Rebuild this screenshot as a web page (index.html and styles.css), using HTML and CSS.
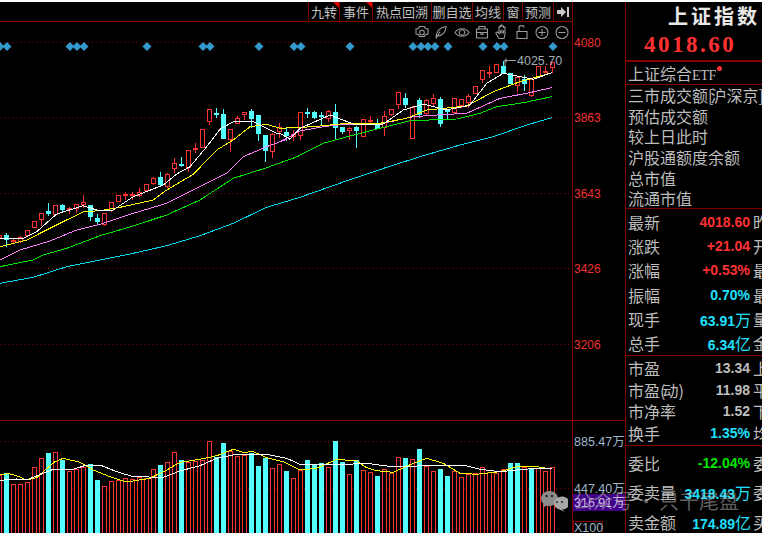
FILE: index.html
```html
<!DOCTYPE html>
<html lang="zh">
<head>
<meta charset="utf-8">
<title>上证指数</title>
<link rel="stylesheet" href="styles.css">
</head>
<body>
<div class="strip"></div>
<div class="app">
  <div class="chart-col">
    <div class="toolbar">
      <div class="btn w31 flag">九转</div>
      <div class="btn w33 flag">事件</div>
      <div class="btn w59">热点回溯</div>
      <div class="btn w41">删自选</div>
      <div class="btn w31">均线</div>
      <div class="btn w19">窗</div>
      <div class="btn w31">预测</div>
      <div class="btn w19">
        <svg class="collapse" width="12" height="12" viewBox="0 0 12 12"><path d="M0 4h4V1l5 5-5 5V8H0z"/><rect x="10" y="1" width="2" height="10"/></svg>
      </div>
    </div>
    <svg id="plot" class="plot" width="572" height="511" viewBox="0 22 572 511">
      <g class="icons">
        <g transform="translate(422 32.5)"><path d="M-2.5-6.5h5l1 2 2.500 .5v5l-2.500 .5-1 2h-5l-1-2-2.500-.5v-5l2.500-.5z" transform="translate(0 .5)"/><circle r="2.300"/></g>
        <g transform="translate(441 32.500)"><path d="M-5 6C-5 0-2-5 5-6 5-1 2 3-3 3.500M-5 6-1-1"/></g>
        <g transform="translate(462 32.500)"><path d="M-7 0C-4-5 4-5 7 0 4 5-4 5-7 0z"/><circle r="2.800"/></g>
        <g transform="translate(482 32.500)"><path d="M-5.500-3.500h11v9h-11zM-5.500 0h11M-3-3.500v-2.500h6v2.500M-1 0v2h2v-2"/></g>
        <g transform="translate(502 32.500)"><path d="M-3 6-6 1c-.5-1 1-2 2-1l1 1v-6c0-1.500 1.500-1.500 1.500 0v-1.500c0-1.500 1.500-1.500 1.500 0v1c0-1.500 1.500-1.500 1.500 0v1c0-1.500 1.500-1.500 1.500 0v6L2 6zM-1.500-2v3M0-3v4M1.500-2v3"/></g>
        <g transform="translate(522 32.500)"><path d="M-5-1h10v7h-10zM-3-1v-4c0-2.500 5-2.500 5 0"/></g>
        <g transform="translate(542 32.500)"><circle r="6"/><path d="M-3.500 0h7M0-3.500v7"/></g>
        <g transform="translate(562 32.500)"><circle r="6"/><path d="M-3.500 0h7"/></g>
      </g>
    </svg>
  </div>
  <svg class="axis" width="52" height="531" viewBox="573 2 52 531">
    <line class="rule" x1="573" x2="625" y1="420.500" y2="420.500"/>
    <text class="price-tick" x="574" y="47">4080</text>
    <text class="price-tick" x="574" y="122">3863</text>
    <text class="price-tick" x="574" y="198">3643</text>
    <text class="price-tick" x="574" y="273">3426</text>
    <text class="price-tick" x="574" y="349">3206</text>
    <text class="vol-tick" x="574" y="446">885.47万</text>
    <text class="vol-tick" x="574" y="493">447.40万</text>
    <rect class="cur-box" x="573" y="494" width="52" height="17"/>
    <text class="cur-tick" x="574" y="507">316.91万</text>
    <rect class="x-box" x="573.500" y="521.500" width="29" height="14"/>
    <text class="vol-tick" x="574" y="532">X100</text>
  </svg>
  <aside class="panel">
    <section class="sec head">
      <div class="title">上证指数</div>
      <div class="last">4018.60</div>
    </section>
    <section class="sec etf-sec">
      <div class="plain">上证综合<span class="etf">ETF</span><span class="dot"></span></div>
    </section>
    <section class="sec list">
      <div class="plain">三市成交额<span class="brk">[</span>沪深京]</div>
      <div class="plain">预估成交额</div>
      <div class="plain">较上日此时</div>
      <div class="plain">沪股通额度余额</div>
      <div class="plain">总市值</div>
      <div class="plain">流通市值</div>
    </section>
    <section class="sec quotes">
      <div class="row"><span>最新</span><b class="red">4018.60</b><i>昨</i></div>
      <div class="row"><span>涨跌</span><b class="red">+21.04</b><i>开</i></div>
      <div class="row"><span>涨幅</span><b class="red">+0.53%</b><i>最</i></div>
      <div class="row"><span>振幅</span><b class="cyan">0.70%</b><i>最</i></div>
      <div class="row"><span>现手</span><b class="cyan">63.91<em>万</em></b><i>量</i></div>
      <div class="row"><span>总手</span><b class="cyan">6.34<em>亿</em></b><i>金</i></div>
    </section>
    <section class="sec ratios">
      <div class="row"><span>市盈</span><b class="gray">13.34</b><i>上</i></div>
      <div class="row"><span>市盈<span class="brk">(</span>动<span class="brk">)</span></span><b class="gray">11.98</b><i>平</i></div>
      <div class="row"><span>市净率</span><b class="gray">1.52</b><i>下</i></div>
      <div class="row"><span>换手</span><b class="cyan">1.35%</b><i>均</i></div>
    </section>
    <section class="orders">
      <div class="row"><span>委比</span><b class="green">-12.04%</b><i>委</i></div>
      <div class="row"><span>委卖量</span><b class="cyan">3418.43<em>万</em></b><i>委</i></div>
      <div class="row"><span>卖金额</span><b class="cyan">174.89<em>亿</em></b><i>买</i></div>
    </section>
  </aside>
</div>
<div class="watermark">
  <svg class="wechat" width="28" height="22" viewBox="0 0 28 22">
    <path class="bub" d="M9.500 1a8.500 7.500 0 1 1-3 14.500L3 18l.8-4A8.500 7.500 0 0 1 9.500 1z"/>
    <path class="bub2" d="M19.500 7a7.500 6.500 0 1 1 2.500 12.600L25 22l-5.500-2.500A7.500 6.500 0 0 1 19.500 7z"/>
    <circle class="eye" cx="6.500" cy="6" r="1.200"/><circle class="eye" cx="12" cy="6" r="1.200"/>
    <circle class="eye" cx="17" cy="12" r="1"/><circle class="eye" cx="22" cy="12" r="1"/>
  </svg>
  <span>公众号 · 只千尾盘</span>
</div>
<script src="chart.js"></script>
</body>
</html>
```
FILE: styles.css
```css
* { box-sizing: border-box; }
html, body { margin: 0; padding: 0; background: #000; }
body { width: 762px; height: 533px; overflow: hidden; position: relative; font-family: "Noto Sans CJK SC", sans-serif; color: #bdbdbd; }
.strip { height: 2px; background: #fff; }
.app { display: flex; height: 531px; }

.chart-col { width: 573px; flex: none; border-right: 1px solid #800000; display: flex; flex-direction: column; }
.toolbar { height: 20px; flex: none; display: flex; justify-content: flex-end; border-bottom: 1px solid #800000; }
.btn { position: relative; border-left: 1px solid #800000; font-size: 13px; line-height: 19px; text-align: center; color: #c0c0c0; overflow: hidden; white-space: nowrap; display: flex; align-items: center; justify-content: center; }
.w19 { width: 19px; }
.w31 { width: 31px; }
.w33 { width: 33px; }
.w41 { width: 41px; }
.w59 { width: 59px; }
.flag::after { content: ""; position: absolute; top: 0; right: 0; border-top: 6px solid #e00000; border-left: 6px solid transparent; }
.collapse { fill: #c8c8c8; }
.plot { display: block; flex: none; }
.icons { fill: none; stroke: #9a9a9a; stroke-width: 1.100; }

.grid { stroke: #800000; stroke-width: 1; stroke-dasharray: 1 3; shape-rendering: crispEdges; }
.rule { stroke: #800000; stroke-width: 1; shape-rendering: crispEdges; }
.diamond { fill: #3399cc; }
.up { fill: #000; stroke: #ff3232; stroke-width: 1; shape-rendering: crispEdges; }
.dn { fill: #54ffff; stroke: #54ffff; stroke-width: 1; shape-rendering: crispEdges; }
.wick-up { stroke: #ff3232; shape-rendering: crispEdges; }
.wick-dn { stroke: #54ffff; shape-rendering: crispEdges; }
.ln { fill: none; stroke-width: 1; shape-rendering: crispEdges; }
.white { stroke: #fff; }
.yellow { stroke: #ffff00; }
.pink { stroke: #ff80ff; }
.lime { stroke: #00e600; }
.sky { stroke: #00d8f0; }
.note { font: 12.500px "Liberation Sans", sans-serif; fill: #a4acb4; }
.note-line { fill: none; stroke: #a0a0a0; }

.axis { display: block; flex: none; font-family: "Liberation Sans", "Noto Sans CJK SC", sans-serif; }
.price-tick { font-size: 12px; fill: #f03030; }
.vol-tick { font-size: 12.500px; fill: #9fb6cc; }
.cur-box { fill: #400088; }
.cur-tick { font-size: 12.500px; fill: #c9b8e0; }
.x-box { fill: none; stroke: #800000; }

.panel { width: 137px; flex: none; border-left: 1px solid #800000; font-size: 16px; line-height: 20px; overflow: hidden; white-space: nowrap; }
.sec { border-bottom: 1px solid #800000; }
.head { height: 60px; border-bottom-width: 2px; }
.title { padding: 2px 0 0 42px; font-size: 20px; font-weight: 700; letter-spacing: 3px; line-height: 27px; color: #e8e8e8; font-family: "Liberation Serif", "Noto Sans CJK SC", serif; }
.last { padding-left: 18px; font: 700 23px/28px "Liberation Serif", serif; letter-spacing: 2.500px; color: #ff3232; }
.etf-sec { height: 23px; padding-top: 1px; }
.etf { font: 14px "Liberation Serif", serif; letter-spacing: -.3px; }
.dot { display: inline-block; width: 5px; height: 5px; border-radius: 50%; background: #ff3232; margin-left: 1px; vertical-align: 9px; }
.brk { letter-spacing: -3px; }
.plain { height: 20.700px; line-height: 20.700px; padding-left: 2px; }
.list { height: 124px; }
.quotes { height: 147px; padding-top: 1px; }
.quotes .row { height: 24.200px; }
.ratios { height: 90px; padding-top: 1px; }
.ratios .row { height: 21.800px; }
.orders { padding-top: 2px; }
.orders .row { height: 29.500px; }
.row { display: flex; align-items: center; padding-left: 2px; }
.row span { flex: none; }
.row b { margin-left: auto; font: 700 14px "Liberation Sans", sans-serif; }
.row em { font: 400 16px "Noto Sans CJK SC", sans-serif; font-style: normal; letter-spacing: -1px; }
.row i { flex: none; width: 9px; margin-left: 3px; overflow: hidden; font-style: normal; }
.red { color: #ff3232; }
.cyan { color: #1fe0ff; }
.gray { color: #bdbdbd; }
.green { color: #00e600; }

.watermark { position: absolute; left: 540px; top: 490px; display: flex; align-items: center; gap: 5px; height: 22px; font-size: 20px; line-height: 22px; word-spacing: -1.500px; color: rgba(190,190,190,.5); white-space: nowrap; }
.wechat { flex: none; }
.bub { fill: #8c8c8c; }
.bub2 { fill: #a8a8a8; }
.eye { fill: #222; }
```
FILE: chart.js
```js
// price: [i, wickTop, bodyTop, bodyBottom, wickBottom, up?]  (coordinates read off the chart)
var a = [
[0,435,435,440,440,1],[1,427,435,448,468,0],[2,445,451,454,460,1],[3,436,440,453,455,1],[4,418,421,434,436,1],
[5,394,394,410,410,1],[6,366,370,388,405,1],[7,336,363,369,375,0],[8,344,346,372,373,1],[9,340,346,356,367,0],
[10,347,355,358,369,1],[11,340,343,354,366,1],[12,312,335,342,352,1],[13,345,345,377,390,0],[14,370,384,393,402,0],
[15,370,370,403,404,1],[16,334,335,360,362,1],[17,316,316,332,332,1],[18,304,312,314,327,1],[19,304,313,316,327,1],
[20,292,305,314,318,1],[21,280,283,299,302,1],[22,258,264,278,282,1],[23,243,262,282,284,0],[24,246,253,288,290,1],
[25,201,220,233,246,1],[26,197,223,226,228,0],[27,178,181,230,243,1],[28,156,173,176,185,1],[29,118,118,170,170,1],
[30,58,58,92,101,1],[31,52,69,72,80,0],[32,55,72,144,144,0],[33,115,118,147,182,1],[34,76,85,98,100,1],
[35,64,66,71,87,1],[36,54,64,83,110,0],[37,75,75,128,150,0],[38,136,136,180,213,0],[39,125,133,182,202,1]];
var b = [
[40,215,232,243,260,1],
[41,228,247,256,270,0],[42,238,252,258,270,1],[43,187,187,255,266,1],[44,170,186,189,200,0],[45,180,186,200,205,0],
[46,183,196,198,225,0],[47,178,184,205,212,1],[48,159,186,230,263,0],[49,228,231,243,250,0],[50,228,235,239,268,1],
[51,226,232,239,290,0],[52,208,208,257,257,1],[53,195,210,213,222,1],[54,205,222,233,235,0],[55,180,199,230,254,1],
[56,175,178,191,195,1],[57,122,127,161,173,1],[58,126,144,161,170,0],[59,165,170,263,263,1],[60,140,151,192,200,0],
[61,145,149,190,195,1],[62,129,145,158,165,1],[63,138,148,220,228,0],[64,180,180,183,205,0],[65,140,145,187,190,1],
[66,143,147,165,170,1],[67,130,138,157,170,1],[68,109,109,129,129,1],[69,60,61,87,95,1],[70,45,67,70,80,1],
[71,40,41,65,66,1],[72,30,48,69,70,0],[73,70,70,100,100,0],[74,82,82,104,122,1],[75,72,88,98,120,0],
[76,82,88,136,137,1],[77,49,49,79,79,1],[78,45,63,65,65,1],[79,35,37,52,66,1]];
// volume tops, zoomed units: [top, up?]
var v1 = [[180,1],[175,0],[207,1],[207,1],[202,1],[157,1],[130,1],[114,0],[112,1],[135,0],[168,1],[162,1],[155,1],[148,0],[195,0],[214,1],[198,1],[195,1],[190,1],[193,1],[185,1],[190,1],[163,1],[150,0],[142,1],[112,1],[135,0],[142,1],[139,1],[135,1],[79,1],[125,0],[84,0],[107,1],[124,1],[120,1],[115,0],[153,0],[130,0],[160,1],[147,1],[168,0],[190,1],[164,1]];
var v2 = [[135,0],[150,0],[144,0],[155,1],[78,0],[141,0],[178,1],[135,0],[165,1],[172,1],[183,0],[163,1],[175,1],[127,1],[129,0],[132,1],[102,0],[152,1],[168,1],[162,0],[183,0],[168,1],[187,1],[178,1],[175,1],[157,1],[172,1],[175,1],[163,1],[144,0],[144,0],[155,1],[163,0],[158,1],[168,1],[157,1]];

var L6 = function (p) { return [p[0] / 3, 90 + p[1] / 3]; };
var L7 = function (p) { return [280 + p[0] / 3, 50 + p[1] / 3]; };
var V4 = function (p) { return [p[0] / 3, 415 + p[1] / 3]; };
var V5 = function (p) { return [300 + p[0] / 3, 415 + p[1] / 3]; };
var lines = [
 ["sky", [[0,580],[100,562],[200,530],[300,510],[400,490],[500,467],[600,437],[700,400],[800,352],[900,322]], L6, [[213,388],[320,352],[430,317],[540,285],[640,260],[740,225],[815,203]]],
 ["lime", [[0,530],[100,510],[130,495],[200,475],[300,437],[400,408],[500,375],[600,330],[700,265],[800,233],[900,197]], L6, [[50,320],[130,280],[210,258],[300,235],[390,212],[530,207],[600,190],[650,170],[730,158],[815,140]]],
 ["pink", [[0,510],[60,480],[150,453],[230,420],[300,403],[400,370],[500,340],[600,290],[680,250],[730,200],[800,170],[860,148]], L6, [[0,275],[60,243],[130,230],[200,222],[300,222],[400,200],[470,195],[560,190],[660,145],[740,130],[815,113]]],
 ["yellow", [[0,470],[80,450],[150,415],[250,365],[300,362],[370,350],[460,330],[500,300],[580,253],[650,180],[700,150],[750,110],[800,103]], L6, [[0,235],[100,230],[200,220],[300,220],[380,205],[440,180],[560,168],[640,125],[720,95],[815,68]]],
 ["white", [[0,447],[70,445],[110,425],[170,372],[250,347],[290,360],[340,360],[400,320],[490,285],[530,252],[570,230],[620,170],[660,118],[700,95],[760,95],[830,130]], L6, [[0,250],[30,268],[60,235],[150,195],[220,222],[310,222],[370,180],[430,162],[500,180],[570,165],[620,100],[670,70],[730,82],[760,88],[815,68]]]
];
var vlines = [
 ["yellow", [[0,180],[25,176],[50,182],[80,195],[110,188],[135,165],[165,140],[190,130],[240,142],[280,165],[330,185],[375,200],[400,198],[450,190],[500,165],[540,142],[600,133],[650,122],[700,103],[730,112],[760,110],[800,128],[850,140],[900,165]], V4,
  [[50,160],[110,133],[170,138],[200,158],[230,167],[280,172],[340,145],[380,130],[430,145],[480,175],[530,178],[600,170],[650,155],[710,155],[755,162]]],
 ["white", [[0,196],[50,192],[85,193],[130,175],[160,163],[220,163],[260,150],[300,150],[350,170],[400,185],[490,187],[540,168],[600,152],[650,130],[700,120],[800,118],[860,130],[900,148]], V4,
  [[50,149],[100,150],[200,145],[260,153],[340,155],[370,150],[490,150],[540,163],[600,170],[650,165],[710,160],[755,162]]]
];

var svg = document.getElementById("plot");
var first = svg.firstElementChild;
function el(name, cls, attrs) {
  var e = document.createElementNS("http://www.w3.org/2000/svg", name);
  e.setAttribute("class", cls);
  for (var k in attrs) e.setAttribute(k, attrs[k]);
  svg.insertBefore(e, first);
  return e;
}
[42.5, 117.5, 193.5, 268.5, 344.5, 441.5, 488.5].forEach(function (y) {
  el("line", "grid", { x1: 0, x2: 572, y1: y, y2: y });
});
el("line", "rule", { x1: 0, x2: 572, y1: 420.5, y2: 420.5 });
[0, 7, 70, 77, 84, 147, 203, 210, 259, 294, 301, 350, 413, 421, 428, 435, 448, 483, 497, 504, 553].forEach(function (x) {
  el("polygon", "diamond", { points: (x - 4.5) + ",46.5 " + x + ",42 " + (x + 4.5) + ",46.5 " + x + ",51" });
});
function px(i) { return 7 * i - 1; }
function candle(c, base) {
  var n = px(c[0]);
  var y = function (z) { return Math.round(base + z / 3) + 0.5; };
  var up = c[5];
  el("line", up ? "wick-up" : "wick-dn", { x1: n + 0.5, x2: n + 0.5, y1: y(c[1]), y2: y(c[4]) });
  el("rect", up ? "up" : "dn", { x: n - 1.5, y: y(c[2]), width: 4, height: Math.max(1, y(c[3]) - y(c[2])) });
}
a.forEach(function (c) { candle(c, 90); });
b.forEach(function (c) { candle(c, 50); });
function vol(i, t) {
  var n = px(i), top = Math.round(415 + t[0] / 3) + 0.5;
  el("rect", t[1] ? "up" : "dn", { x: n - 1.5, y: top, width: 4, height: 540 - top });
}
v1.forEach(function (t, i) { vol(i, t); });
v2.forEach(function (t, i) { vol(i + 44, t); });
function poly(l, second) {
  var pts = l[1].map(l[2]).concat(l[3].map(second));
  el("polyline", "ln " + l[0], { points: pts.map(function (p) { return p[0].toFixed(1) + "," + p[1].toFixed(1); }).join(" ") });
}
lines.forEach(function (l) { poly(l, L7); });
vlines.forEach(function (l) { poly(l, V5); });
el("path", "note-line", { d: "M505 66V60.500H516M507 58.500L504.500 60.500L507 62.500" });
var t = el("text", "note", { x: 517, y: 65 });
t.textContent = "4025.70";
```
